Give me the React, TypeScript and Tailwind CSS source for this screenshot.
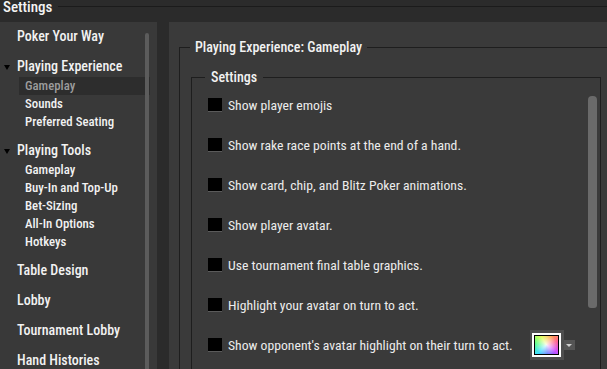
import React from "react";

const FONT =
  "font-['Roboto_Condensed','Liberation_Sans_Narrow','DejaVu_Sans_Condensed',Roboto,sans-serif]";

function Top({
  label,
  open = false,
  className = "",
}: {
  label: string;
  open?: boolean;
  className?: string;
}) {
  return (
    <div
      className={`relative h-[20px] flex items-center pl-[17px] text-[14px] font-medium text-[#f2f2f2] whitespace-nowrap ${className}`}
    >
      {open && (
        <span className="absolute left-[4px] top-[9px] w-0 h-0 border-l-[3px] border-r-[3px] border-t-[5px] border-l-transparent border-r-transparent border-t-black" />
      )}
      {label}
    </div>
  );
}

function Sub({
  label,
  selected = false,
  className = "",
}: {
  label: string;
  selected?: boolean;
  className?: string;
}) {
  return (
    <div
      className={`h-[18px] flex items-center text-[12.8px] font-medium whitespace-nowrap ${
        selected
          ? "ml-[19px] w-[131px] pl-[6px] bg-[#2d2d2d] text-[#9c9c9c]"
          : "pl-[25px] text-[#f2f2f2]"
      } ${className}`}
    >
      {label}
    </div>
  );
}

function Check() {
  return (
    <span className="w-[14px] h-[14px] shrink-0 bg-black border-b border-[#5a5a5a]" />
  );
}

function Row({ label, children }: { label: string; children?: React.ReactNode }) {
  return (
    <div className="h-[40px] flex items-center pl-[16px]">
      <Check />
      <span className="ml-[6px] text-[13.7px] text-[#ececec] whitespace-nowrap">
        {label}
      </span>
      {children}
    </div>
  );
}

function ColorPicker() {
  return (
    <div className="flex items-center ml-[17px]">
      <div className="w-[34px] h-[30px] bg-[#4e4e4e] flex items-center justify-center">
        <div className="w-[29px] h-[24px] border-2 border-white bg-black p-px">
          <div className="w-full h-full bg-[conic-gradient(from_20deg,#ffb040,#ff6090,#d050ff,#5070ff,#40e0ff,#60ff90,#e0ff50,#ffb040)]">
            <div className="w-full h-full bg-[radial-gradient(circle,rgba(255,255,255,0.9),rgba(255,255,255,0)_75%)]" />
          </div>
        </div>
      </div>
      <div className="w-[11px] h-[10px] bg-[#555555] flex items-center justify-center">
        <span className="w-0 h-0 border-l-[3px] border-r-[3px] border-t-[3px] border-l-transparent border-r-transparent border-t-[#cfcfcf]" />
      </div>
    </div>
  );
}

export default function App() {
  return (
    <div
      className={`w-[607px] h-[369px] overflow-hidden bg-[#2b2b2b] flex flex-col ${FONT}`}
    >
      {/* header */}
      <div className="h-[22px] shrink-0 flex items-start">
        <span className="ml-[3px] text-[15px] leading-[15px] font-medium text-[#f4f4f4]">
          Settings
        </span>
        <div className="flex-1 h-px bg-[#1b1b1b] mt-[6px] ml-[6px]" />
      </div>

      <div className="flex flex-1 min-h-0">
        {/* sidebar */}
        <aside className="relative w-[157px] shrink-0 bg-[#393939] pt-[4px] overflow-hidden">
          <Top label="Poker Your Way" />
          <Top label="Playing Experience" open className="mt-[10px]" />
          <Sub label="Gameplay" selected className="mt-[1px]" />
          <Sub label="Sounds" />
          <Sub label="Preferred Seating" />
          <Top label="Playing Tools" open className="mt-[9px]" />
          <Sub label="Gameplay" className="mt-[1px]" />
          <Sub label="Buy-In and Top-Up" />
          <Sub label="Bet-Sizing" />
          <Sub label="All-In Options" />
          <Sub label="Hotkeys" />
          <Top label="Table Design" className="mt-[9px]" />
          <Top label="Lobby" className="mt-[10px]" />
          <Top label="Tournament Lobby" className="mt-[10px]" />
          <Top label="Hand Histories" className="mt-[10px]" />
          <div className="absolute left-[145px] top-[11px] bottom-0 w-[4px] rounded-t-sm bg-[#5c5c5c]" />
        </aside>

        {/* main */}
        <main className="flex-1 ml-[12px] bg-[#3a3a3a] overflow-hidden pl-[10px] pt-[17px]">
          <fieldset className="w-[440px] shrink-0 border border-[#1e1e1e] pt-[14px]">
            <legend className="ml-[10px] px-[5px] text-[14px] leading-[16px] font-medium text-[#f2f2f2]">
              Playing Experience: Gameplay
            </legend>
            <fieldset className="ml-[11px] w-[410px] border border-[#1e1e1e] pb-[30px]">
              <legend className="ml-[13px] px-[6px] text-[14px] leading-[16px] font-medium text-[#f2f2f2]">
                Settings
              </legend>
              <div className="relative">
                <Row label="Show player emojis" />
                <Row label="Show rake race points at the end of a hand." />
                <Row label="Show card, chip, and Blitz Poker animations." />
                <Row label="Show player avatar." />
                <Row label="Use tournament final table graphics." />
                <Row label="Highlight your avatar on turn to act." />
                <Row label="Show opponent's avatar highlight on their turn to act.">
                  <ColorPicker />
                </Row>
                <div className="absolute left-[396px] top-[11px] w-[9px] h-[212px] rounded-t-[4px] rounded-b-[3px] bg-[#6a6a6a]" />
              </div>
            </fieldset>
          </fieldset>
        </main>
      </div>
    </div>
  );
}
